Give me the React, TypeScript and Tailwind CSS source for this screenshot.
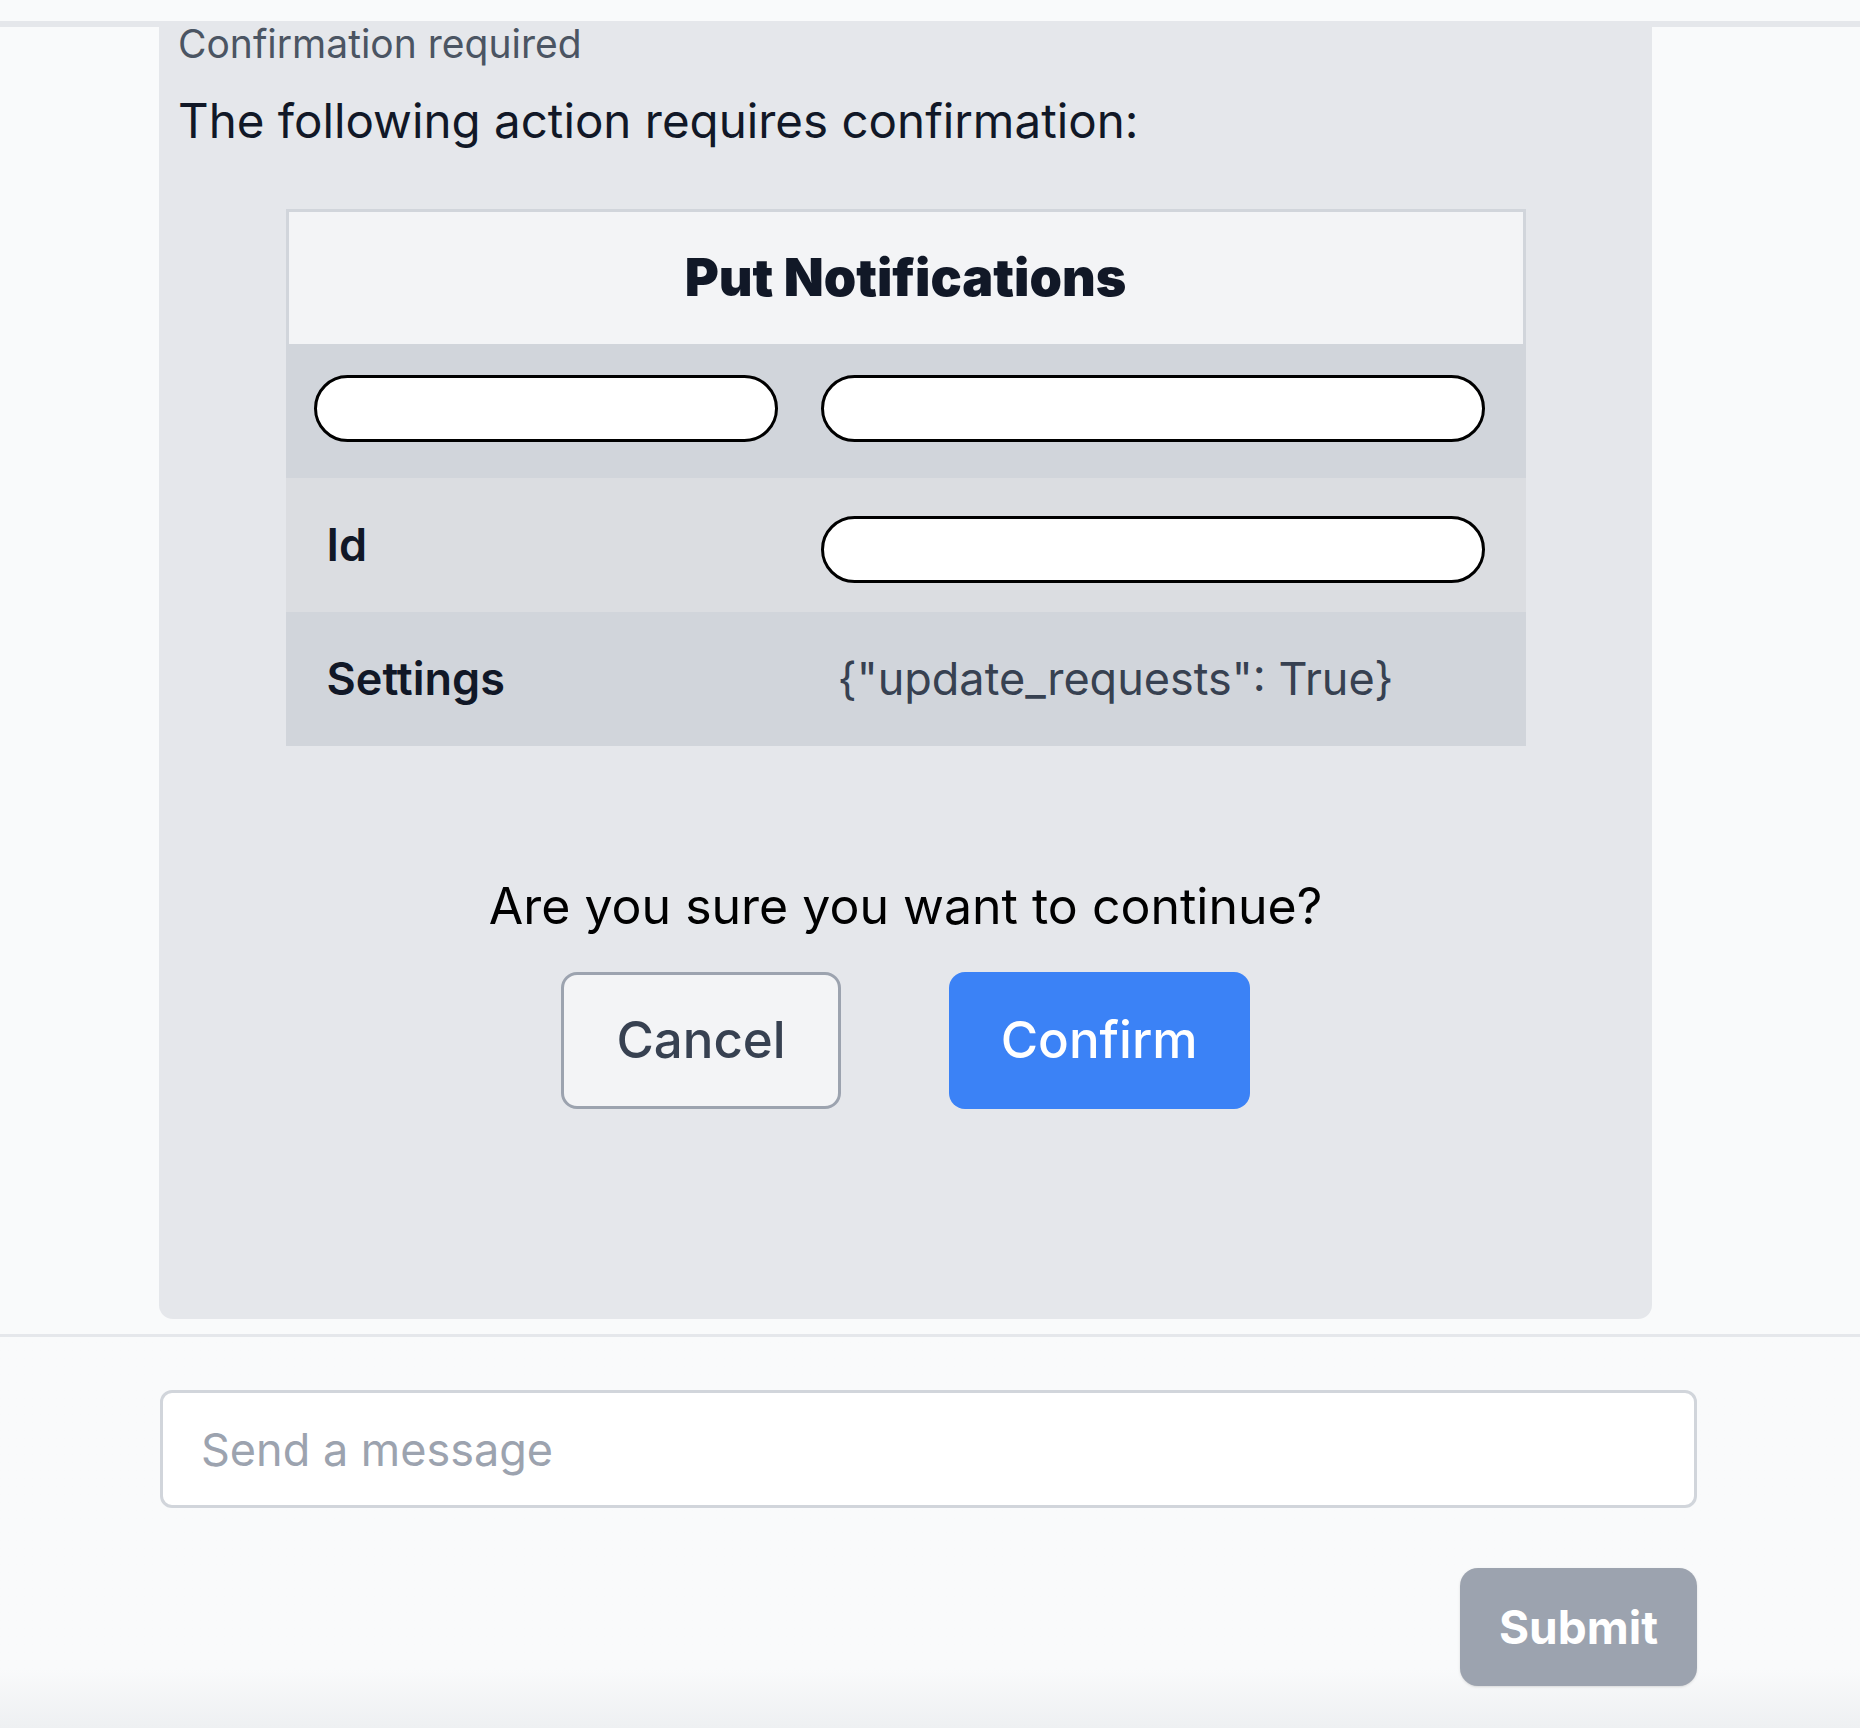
import { useState } from "react";

// 待确认操作的参数行
const rows = [
  { key: "", value: "", editableKey: true, editableValue: true, shade: "bg-[#d1d5db]", pill: "-mt-[6px]" },
  { key: "Id", value: "", editableKey: false, editableValue: true, shade: "bg-[#dbdde1]", pill: "mt-[8px]" },
  {
    key: "Settings",
    value: '{"update_requests": True}',
    editableKey: false,
    editableValue: false,
    shade: "bg-[#d1d5db]",
    pill: "",
  },
];

function PillInput({ width, offset }: { width: string; offset: string }) {
  return (
    <input
      className={`${width} ${offset} block h-[67px] rounded-full border-[3px] border-black bg-white px-6 text-[40px] outline-none`}
    />
  );
}

function ConfirmTable() {
  return (
    <div className="mx-auto w-[1240px]">
      {/* 标题 */}
      <div className="flex h-[135px] items-center justify-center border-[3px] border-b-0 border-[#d1d5db] bg-[#f3f4f6]">
        <span className="text-[52px] font-black text-[#111827]">Put Notifications</span>
      </div>

      {rows.map((row, i) => (
        <div key={i} className={`grid h-[134px] grid-cols-[514px_1fr] items-center ${row.shade}`}>
          <div className="pl-[28px]">
            {row.editableKey ? (
              <PillInput width="w-[464px]" offset={row.pill} />
            ) : (
              <span className="pl-[13px] text-[45px] font-semibold text-[#111827]">{row.key}</span>
            )}
          </div>
          <div className="pl-[21px]">
            {row.editableValue ? (
              <PillInput width="w-[664px]" offset={row.pill} />
            ) : (
              <span className="pl-[17px] text-[45px] text-[#374151]">{row.value}</span>
            )}
          </div>
        </div>
      ))}
    </div>
  );
}

export default function App() {
  const [message, setMessage] = useState("");

  return (
    <div
      className="flex h-[1728px] w-[1860px] flex-col bg-[#f9fafb]"
      style={{ fontFamily: "Inter, 'Noto Sans', sans-serif" }}
    >
      {/* 顶部 */}
      <div className="h-[27px] shrink-0 border-b-[6px] border-[#e5e7eb]" />

      {/* 消息区域，滚动到底部 */}
      <div className="flex min-h-0 flex-1 flex-col justify-end overflow-hidden pb-[15px]">
        <div className="ml-[159px] w-[1493px] rounded-[14px] bg-[#e5e7eb] pb-[210px] pl-[19px] pt-[24px]">
          <div className="text-[39px] leading-[47px] text-[#4b5563]">Confirmation required</div>
          <div className="mt-[25px] text-[47.5px] leading-[58px] text-[#111827]">
            The following action requires confirmation:
          </div>

          <div className="mt-[59px] -ml-[19px]">
            <ConfirmTable />
          </div>

          <div className="-ml-[19px] mt-[130px] flex flex-col items-center">
            <div className="text-[50px] leading-[60px] text-black">Are you sure you want to continue?</div>
            <div className="mt-[36px] flex gap-[108px]">
              <button className="h-[137px] rounded-[16px] border-[3px] border-[#9ca3af] bg-[#f3f4f6] px-[52px] text-[51px] font-medium text-[#374151]">
                Cancel
              </button>
              <button className="h-[137px] rounded-[16px] bg-[#3b82f6] px-[52px] text-[51px] font-medium text-white">
                Confirm
              </button>
            </div>
          </div>
        </div>
      </div>

      {/* 输入区域 */}
      <div className="shrink-0 border-t-[3px] border-[#e5e7eb] bg-gradient-to-b from-[#f9fafb] from-[85%] to-[#eef0f2] pb-[42px] pl-[160px] pr-[163px] pt-[53px]">
        <input
          value={message}
          onChange={(e) => setMessage(e.target.value)}
          placeholder="Send a message"
          className="h-[118px] w-full rounded-[12px] border-[3px] border-[#d1d5db] bg-white px-[38px] text-[45px] text-[#111827] outline-none placeholder:text-[#9ca3af]"
        />
        <div className="mt-[60px] flex justify-end">
          <button className="h-[118px] w-[237px] rounded-[18px] bg-[#9ca3af] text-[46px] font-bold text-white shadow-sm">
            Submit
          </button>
        </div>
      </div>
    </div>
  );
}
